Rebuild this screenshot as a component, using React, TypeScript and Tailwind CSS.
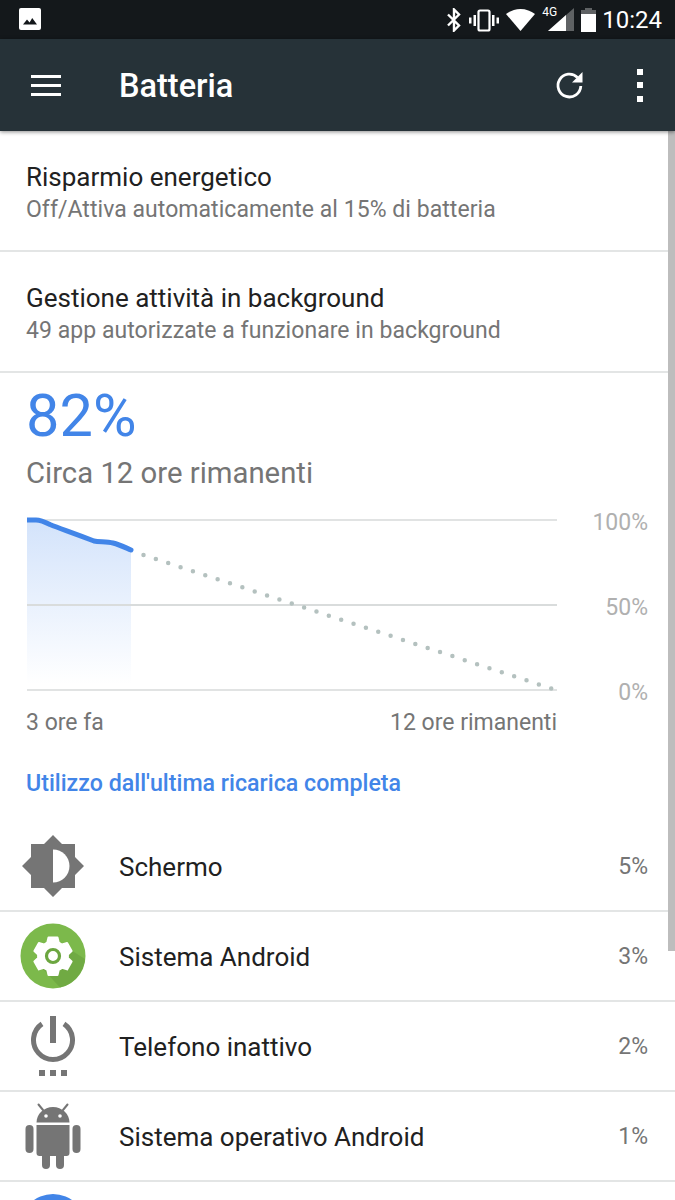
import React from 'react';

const font = { fontFamily: 'Roboto, sans-serif' };

const StatusBar = () => (
  <div className="h-[39px] bg-[#14181b] flex items-center pl-[18px] pr-[13px] shrink-0">
    <svg width="24" height="24" viewBox="0 0 24 24" className="mt-[-1px]">
      <rect x="1" y="1" width="22" height="22" rx="2" fill="#fff" />
      <path d="M5 17.5l4-5 2.6 3 2.6-4.5 4.8 6.5z" fill="#14181b" />
    </svg>
    <div className="flex-1" />
    <svg width="16" height="24" viewBox="0 0 16 24" className="mr-[7px]">
      <path d="M2 6.500l11 11-5 5V1.500l5 5-11 11" fill="none" stroke="#fff" strokeWidth="2.400" />
    </svg>
    <svg width="30" height="24" viewBox="0 0 30 24" className="mr-[7px] mt-[2px]">
      <rect x="9.500" y="1.500" width="11" height="20" rx="1.500" fill="none" stroke="#fff" strokeWidth="2.200" />
      <rect x="4.500" y="6" width="2.500" height="11" fill="#fff" />
      <rect x="0" y="8.500" width="2.500" height="6" fill="#fff" />
      <rect x="23" y="6" width="2.500" height="11" fill="#fff" />
      <rect x="27.500" y="8.500" width="2.500" height="6" fill="#fff" />
    </svg>
    <svg width="29" height="22" viewBox="0 0 29 22" className="mr-[7px] mt-[1px]">
      <path d="M0 5C4 2 9 0 14.500 0S25 2 29 5L14.500 22z" fill="#fff" />
    </svg>
    <div className="relative w-[32px] h-[26px] mr-[7px] mt-[-1px]">
      <span className="absolute left-0 top-[-1px] text-[12px] leading-[14px] text-white">4G</span>
      <svg width="26" height="23" viewBox="0 0 26 23" className="absolute left-[6px] top-[2px]">
        <path d="M0 23L26 0v23z" fill="#5f6264" />
        <path d="M0 23L18 7.100V23z" fill="#fff" />
      </svg>
    </div>
    <svg width="15" height="24" viewBox="0 0 15 24" className="mr-[6px] mt-[1px]">
      <rect x="4" y="0" width="7" height="3" fill="#5f6264" />
      <rect x="0" y="2" width="15" height="4" fill="#5f6264" />
      <rect x="0" y="6" width="15" height="18" fill="#fff" />
    </svg>
    <span className="text-white text-[24px] leading-none">10:24</span>
  </div>
);

const ToolBar = () => (
  <div className="h-[92px] bg-[#263238] flex items-center shrink-0 shadow-[0_1px_4px_rgba(0,0,0,0.45)] relative z-10">
    <div className="ml-[31px] w-[30px] h-[21px] flex flex-col justify-between">
      <div className="h-[3px] bg-white" />
      <div className="h-[3px] bg-white" />
      <div className="h-[3px] bg-white" />
    </div>
    <span className="ml-[58px] text-white text-[32.5px] font-medium mt-[3px]">Batteria</span>
    <div className="flex-1" />
    <svg width="30" height="30" viewBox="0 0 30 30" className="mr-[52px]">
      <path d="M22.500 7.500A11.400 11.400 0 1 0 25.800 16" fill="none" stroke="#fff" strokeWidth="2.800" />
      <path d="M17 12.500h10.500V2z" fill="#fff" />
    </svg>
    <div className="mr-[32px] w-[6px] h-[33px] flex flex-col justify-between">
      <div className="h-[6px] bg-white" />
      <div className="h-[6px] bg-white" />
      <div className="h-[6px] bg-white" />
    </div>
  </div>
);

const SettingRow = ({ title, sub }: { title: string; sub: string }) => (
  <div className="h-[121px] shrink-0 pl-[26px] border-b-2 border-[#e3e5e5] pt-[30px]">
    <div className="text-[26px] leading-[32px] text-[#212121]">{title}</div>
    <div className="text-[23px] leading-[28px] text-[#757575] mt-[3px] tracking-[0.05px]">{sub}</div>
  </div>
);

const Chart = () => (
  <div className="relative h-[191px] shrink-0 mt-[9px] ml-[27px]">
    <svg width="535" height="191" viewBox="0 0 535 191" className="block">
      <defs>
        <linearGradient id="fill" x1="0" y1="0" x2="0" y2="1">
          <stop offset="0" stopColor="#d3e3fb" />
          <stop offset="1" stopColor="#ffffff" />
        </linearGradient>
      </defs>
      <path d="M0 20H9C13 20 16 21 23 24.500 34 29 44 32 67 41 72 42 80 41.500 86 43 92 44.500 96 46.500 104 50V184H0z" fill="url(#fill)" />
      <rect x="0" y="19" width="530" height="2" fill="#e1e3e3" />
      <rect x="0" y="104" width="530" height="2" fill="#d9dcdc" />
      <rect x="0" y="189" width="530" height="2" fill="#e1e3e3" />
      <path d="M0 20H9C13 20 16 21 23 24.500 34 29 44 32 67 41 72 42 80 41.500 86 43 92 44.500 96 46.500 104 50" fill="none" stroke="#4285e8" strokeWidth="5" strokeLinecap="round" />
      <path d="M116.500 55L529 190" fill="none" stroke="#b4c1bf" strokeWidth="4.500" strokeLinecap="round" strokeDasharray="0 13" />
    </svg>
    <span className="absolute right-[27px] top-[9px] text-[23px] leading-[28px] text-[#b0b0b0]">100%</span>
    <span className="absolute right-[27px] top-[94px] text-[23px] leading-[28px] text-[#b0b0b0]">50%</span>
    <span className="absolute right-[27px] top-[179px] text-[23px] leading-[28px] text-[#b0b0b0]">0%</span>
  </div>
);

const BrightnessIcon = () => (
  <svg width="62" height="62" viewBox="0 0 62 62">
    <path d="M31 0l9 9h13v13l9 9-9 9v13H40l-9 9-9-9H9V40l-9-9 9-9V9h13z" fill="#757575" />
    <path d="M31 14.500c9.100 0 16.500 7.400 16.500 16.500S40.100 47.500 31 47.500z" fill="#fff" />
  </svg>
);

const GearIcon = () => (
  <svg width="66" height="66" viewBox="0 0 66 66">
    <circle cx="33" cy="33" r="32.500" fill="#7cb94b" />
    <path d="M21 44L43 22l22 14A32.500 32.500 0 0 1 40 64.500z" fill="#6ca640" opacity="0.75" />
    <path d="M28.500 14.500h9l1.200 5 3.400 2 5-1.500 4.500 8-3.700 3.500v3.400l3.700 3.500-4.500 8-5-1.500-3.400 2-1.200 5h-9l-1.200-5-3.400-2-5 1.500-4.500-8 3.700-3.500v-3.400l-3.700-3.500 4.500-8 5 1.500 3.400-2z" fill="#fff" stroke="#fff" strokeWidth="2" strokeLinejoin="round" />
    <circle cx="33" cy="33" r="6.500" fill="none" stroke="#6ca640" strokeWidth="3.200" />
  </svg>
);

const PowerIcon = () => (
  <svg width="46" height="60" viewBox="0 0 46 60">
    <rect x="20" y="0" width="6" height="27" fill="#757575" />
    <path d="M12 7.900a19.500 19.500 0 1 0 22 0" fill="none" stroke="#757575" strokeWidth="5" />
    <rect x="9" y="54" width="6" height="6" fill="#757575" />
    <rect x="20" y="54" width="6" height="6" fill="#757575" />
    <rect x="31" y="54" width="6" height="6" fill="#757575" />
  </svg>
);

const AndroidIcon = () => (
  <svg width="56" height="66" viewBox="0 0 56 66">
    <path d="M11.500 19.500C11.500 11 19 4 28 4s16.500 7 16.500 15.500z" fill="#757575" />
    <path d="M13.500 1.500L18 7M42.500 1.500L38 7" stroke="#757575" strokeWidth="2" strokeLinecap="round" />
    <circle cx="21" cy="13" r="1.800" fill="#fff" />
    <circle cx="35" cy="13" r="1.800" fill="#fff" />
    <path d="M11.500 22h33v28a3 3 0 0 1-3 3h-27a3 3 0 0 1-3-3z" fill="#757575" />
    <rect x="0.500" y="22" width="8" height="28" rx="4" fill="#757575" />
    <rect x="47.500" y="22" width="8" height="28" rx="4" fill="#757575" />
    <rect x="17" y="48" width="8" height="18" rx="4" fill="#757575" />
    <rect x="31" y="48" width="8" height="18" rx="4" fill="#757575" />
  </svg>
);

const AppRow = ({ icon, name, pct }: { icon: React.ReactNode; name: string; pct: string }) => (
  <div className="h-[90px] shrink-0 border-b-2 border-[#e3e5e5] flex items-center pr-[27px]">
    <div className="w-[106px] flex justify-center shrink-0">{icon}</div>
    <span className="ml-[13px] flex-1 text-[26px] text-[#212121] mt-[3px]">{name}</span>
    <span className="text-[23px] text-[#757575] mt-[3px]">{pct}</span>
  </div>
);

export default function App() {
  return (
    <div className="relative w-[675px] h-[1200px] overflow-hidden bg-white flex flex-col" style={font}>
      <StatusBar />
      <ToolBar />
      <SettingRow title="Risparmio energetico" sub="Off/Attiva automaticamente al 15% di batteria" />
      <SettingRow title="Gestione attività in background" sub="49 app autorizzate a funzionare in background" />

      {/* Battery */}
      <div className="pl-[26px] pt-[8px] shrink-0">
        <div className="text-[59.500px] leading-[70px] text-[#4285e8]">82%</div>
        <div className="text-[29.300px] leading-[36px] text-[#757575] mt-[4px]">Circa 12 ore rimanenti</div>
      </div>
      <Chart />
      <div className="flex justify-between shrink-0 pl-[26px] pr-[118px] mt-[18px] text-[23px] leading-[28px] text-[#757575]">
        <span>3 ore fa</span>
        <span>12 ore rimanenti</span>
      </div>
      <div className="pl-[26px] shrink-0 mt-[31px] text-[23.200px] leading-[30px] font-medium text-[#4285e8]">
        Utilizzo dall'ultima ricarica completa
      </div>

      <div className="mt-[24px] shrink-0">
        <AppRow icon={<BrightnessIcon />} name="Schermo" pct="5%" />
        <AppRow icon={<GearIcon />} name="Sistema Android" pct="3%" />
        <AppRow icon={<PowerIcon />} name="Telefono inattivo" pct="2%" />
        <AppRow icon={<AndroidIcon />} name="Sistema operativo Android" pct="1%" />
        <div className="w-[66px] h-[66px] rounded-full bg-[#4285e8] ml-[20px] mt-[12px]" />
      </div>

      {/* scrollbar */}
      <div className="absolute right-0 top-[131px] w-[7px] h-[820px] bg-[#bdbdbd]" />
    </div>
  );
}
